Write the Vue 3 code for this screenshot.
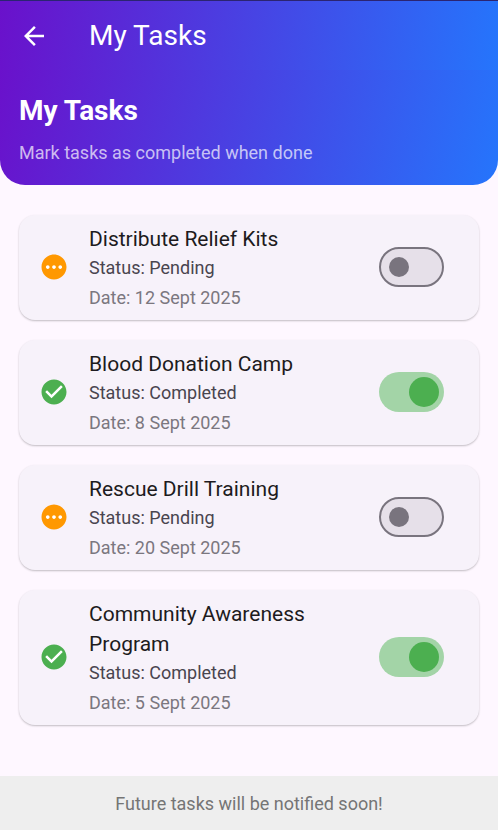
<script setup>
import { ref } from 'vue'

const tasks = ref([
  { id: 1, title: 'Distribute Relief Kits', date: '12 Sept 2025', done: false },
  { id: 2, title: 'Blood Donation Camp', date: '8 Sept 2025', done: true },
  { id: 3, title: 'Rescue Drill Training', date: '20 Sept 2025', done: false },
  { id: 4, title: 'Community Awareness Program', date: '5 Sept 2025', done: true },
])
</script>

<template>
  <div class="page">
    <header class="app-bar">
      <button class="back" type="button" aria-label="Back">
        <svg viewBox="0 0 24 24" aria-hidden="true">
          <path d="M20 11H7.83l5.59-5.59L12 4l-8 8 8 8 1.41-1.41L7.83 13H20v-2z" />
        </svg>
      </button>
      <h1 class="app-title">My Tasks</h1>
    </header>

    <section class="banner">
      <h2 class="banner-title">My Tasks</h2>
      <p class="banner-text">Mark tasks as completed when done</p>
    </section>

    <main class="list">
      <article v-for="task in tasks" :key="task.id" class="card">
        <svg v-if="task.done" class="state done" viewBox="0 0 24 24" aria-hidden="true">
          <path d="M12 2C6.48 2 2 6.48 2 12s4.48 10 10 10 10-4.48 10-10S17.52 2 12 2zm-2 15l-5-5 1.41-1.41L10 14.17l7.59-7.59L19 8l-9 9z" />
        </svg>
        <svg v-else class="state pending" viewBox="0 0 24 24" aria-hidden="true">
          <path d="M12 2C6.48 2 2 6.48 2 12s4.48 10 10 10 10-4.48 10-10S17.52 2 12 2zM7 13.5c-.83 0-1.5-.67-1.5-1.5s.67-1.5 1.5-1.5 1.5.67 1.5 1.5-.67 1.5-1.5 1.5zm5 0c-.83 0-1.5-.67-1.5-1.5s.67-1.5 1.5-1.5 1.5.67 1.5 1.5-.67 1.5-1.5 1.5zm5 0c-.83 0-1.5-.67-1.5-1.5s.67-1.5 1.5-1.5 1.5.67 1.5 1.5-.67 1.5-1.5 1.5z" />
        </svg>
        <div class="info">
          <label class="title" :for="'task-' + task.id">{{ task.title }}</label>
          <p class="status">Status: {{ task.done ? 'Completed' : 'Pending' }}</p>
          <p class="date">Date: {{ task.date }}</p>
        </div>
        <input :id="'task-' + task.id" v-model="task.done" class="switch" type="checkbox" role="switch" />
      </article>
    </main>

    <footer class="footer">Future tasks will be notified soon!</footer>
  </div>
</template>

<style>
body {
  margin: 0;
  background: #fef7ff;
}
</style>

<style scoped>
.page {
  display: flex;
  flex-direction: column;
  min-height: 100vh;
  font-family: Roboto, sans-serif;
  background: #fef7ff;
}

h1,
h2,
p {
  margin: 0;
}

.app-bar {
  display: flex;
  align-items: center;
  gap: 40px;
  box-sizing: border-box;
  height: 70px;
  padding: 0 19px;
  color: #fff;
  background: linear-gradient(98deg, #6a11cb, #2575fc);
  border-top: 1px solid #2b2472;
}

.back {
  display: flex;
  width: 30px;
  height: 30px;
  padding: 0;
  background: none;
  border: 0;
  cursor: pointer;
}

.back svg {
  width: 30px;
  height: 30px;
  fill: #fff;
}

.app-title {
  font-size: 28px;
  font-weight: 400;
  line-height: 35px;
}

.banner {
  padding: 21px 19px 20px;
  color: #fff;
  background: linear-gradient(103deg, #6a11cb, #2575fc);
  border-radius: 0 0 25px 25px;
}

.banner-title {
  font-size: 28px;
  font-weight: 700;
  line-height: 40px;
}

.banner-text {
  margin-top: 9px;
  font-size: 18px;
  line-height: 25px;
  color: rgba(255, 255, 255, 0.7);
}

.list {
  display: flex;
  flex: 1;
  flex-direction: column;
  gap: 20px;
  padding: 30px 19px;
}

.card {
  display: flex;
  align-items: center;
  gap: 20px;
  padding: 9px 35px 10px 20px;
  background: #f7f2fa;
  border-radius: 16px;
  box-shadow: 0 1px 2px rgba(0, 0, 0, 0.24);
}

.state {
  flex: none;
  width: 30px;
  height: 30px;
}

.done {
  fill: #4caf50;
  background: radial-gradient(circle, #fff 10px, transparent 11px);
}

.pending {
  fill: #ff9800;
  background: radial-gradient(circle, #fff 10px, transparent 11px);
}

.info {
  flex: 1;
  min-width: 0;
}

.title {
  display: block;
  font-size: 21px;
  line-height: 30px;
  color: #1d1b20;
}

.status,
.date {
  font-size: 18px;
  line-height: 25px;
}

.status {
  margin-top: 1px;
  color: #49454f;
}

.date {
  margin-top: 5px;
  color: #7b777f;
}

.switch {
  display: flex;
  flex: none;
  align-items: center;
  box-sizing: border-box;
  width: 65px;
  height: 40px;
  margin: 0;
  padding: 0 8px;
  appearance: none;
  background: #e6e0e9;
  border: 2px solid #79747e;
  border-radius: 20px;
  cursor: pointer;
}

.switch::before {
  width: 20px;
  height: 20px;
  content: '';
  background: #79747e;
  border-radius: 50%;
}

.switch:checked {
  justify-content: flex-end;
  padding: 0 5px;
  background: #a3d4a7;
  border: 0;
}

.switch:checked::before {
  width: 30px;
  height: 30px;
  background: #4caf50;
}

.footer {
  padding: 16px 20px 14px;
  font-size: 18px;
  line-height: 24px;
  color: #757575;
  text-align: center;
  background: #eee;
}
</style>
